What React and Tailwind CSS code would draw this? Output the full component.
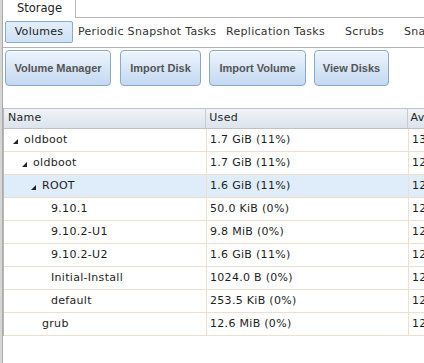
import React from "react";

const rows = [
  { name: "oldboot", level: 0, tri: true, used: "1.7 GiB (11%)", av: "13" },
  { name: "oldboot", level: 1, tri: true, used: "1.7 GiB (11%)", av: "12" },
  { name: "ROOT", level: 2, tri: true, used: "1.6 GiB (11%)", av: "12", sel: true },
  { name: "9.10.1", level: 3, used: "50.0 KiB (0%)", av: "12" },
  { name: "9.10.2-U1", level: 3, used: "9.8 MiB (0%)", av: "12" },
  { name: "9.10.2-U2", level: 3, used: "1.6 GiB (11%)", av: "12" },
  { name: "Initial-Install", level: 3, used: "1024.0 B (0%)", av: "12" },
  { name: "default", level: 3, used: "253.5 KiB (0%)", av: "12" },
  { name: "grub", level: 2, used: "12.6 MiB (0%)", av: "12" },
];

const indent = ["pl-[9px]", "pl-[18px]", "pl-[27px]", "pl-[36px]"];

function Tri() {
  return (
    <svg width="5" height="5" viewBox="0 0 5 5" className="block">
      <polygon points="5,0 5,5 0,5" fill="#222" />
    </svg>
  );
}

function BigButton({ w, children }) {
  return (
    <div
      className={`${w} h-[36px] flex items-center justify-center rounded-[4px] border border-[#8aa8c9] bg-gradient-to-b from-[#edf4fc] to-[#c3d9f1] text-[11px] font-bold text-[#555] tracking-normal shadow-[inset_0_1px_0_#fff]`}
      style={{ fontFamily: '"Liberation Sans", Arial, sans-serif' }}
    >
      {children}
    </div>
  );
}

export default function App() {
  return (
    <div
      className="w-[424px] h-[363px] overflow-hidden bg-white border-l-2 border-[#d6d6d6] text-[11px] tracking-[0.3px] text-[#1e1e1e]"
      style={{ fontFamily: '"DejaVu Sans", Verdana, sans-serif' }}
    >
      <div className="h-full border-l border-[#a9a9a9] flex flex-col">
        {/* Top tab bar */}
        <div className="flex h-[18px] shrink-0">
          <div className="w-[73px] h-[18px] border-r border-[#b8b8b8] pl-[14px] flex items-center text-[#222] text-[11.5px] tracking-normal">
            Storage
          </div>
          <div className="flex-1 border-b border-[#b8b8b8]" />
        </div>

        {/* Sub tabs */}
        <div className="h-[30px] shrink-0 border-b border-[#b4b4b4] flex items-start pt-[3px] pl-[2px] text-[#333] whitespace-nowrap overflow-hidden">
          <div className="w-[68px] shrink-0 h-[22px] rounded-[2px] border border-[#87acd2] bg-gradient-to-b from-[#e4eefa] to-[#cfe1f5] flex items-center justify-center text-[#222]">
            Volumes
          </div>
          <div className="w-[153px] shrink-0 h-[22px] pl-[5px] flex items-center">Periodic Snapshot Tasks</div>
          <div className="w-[119px] shrink-0 h-[22px] flex items-center">Replication Tasks</div>
          <div className="w-[59px] shrink-0 h-[22px] flex items-center">Scrubs</div>
          <div className="shrink-0 h-[22px] flex items-center">Snapshots</div>
        </div>

        {/* Buttons */}
        <div className="flex pt-[2px] pl-[2px] shrink-0">
          <BigButton w="w-[106px]">Volume Manager</BigButton>
          <div className="ml-[9px]">
            <BigButton w="w-[81px]">Import Disk</BigButton>
          </div>
          <div className="ml-[8px]">
            <BigButton w="w-[97px]">Import Volume</BigButton>
          </div>
          <div className="ml-[8px]">
            <BigButton w="w-[75px]">View Disks</BigButton>
          </div>
        </div>

        {/* Table */}
        <div className="mt-[22px] w-[460px] border-l border-[#b9b9b9]">
          <div className="flex h-[21px] border-t border-b border-[#c2c2c2] bg-gradient-to-b from-[#f0f4f8] to-[#dbe3ec] text-[#1e1e1e]">
            <div className="w-[203px] border-r border-[#c6ccd3] pl-[4px] flex items-center">Name</div>
            <div className="w-[202px] border-r border-[#c6ccd3] pl-[3px] flex items-center">Used</div>
            <div className="flex-1 pl-[3px] flex items-center">Available</div>
          </div>
          {rows.map((r, i) => (
            <div
              key={i}
              className={`flex h-[23px] border-b border-[#efdfcf] ${r.sel ? "bg-[#dfecfa]" : "bg-white"}`}
            >
              <div className={`w-[203px] border-r border-[#efdfcf] flex items-center ${indent[r.level]}`}>
                <div className="w-[5px] h-[5px] mt-[3px]">{r.tri ? <Tri /> : null}</div>
                <div className="ml-[6px]">{r.name}</div>
              </div>
              <div className="w-[202px] border-r border-[#efdfcf] pl-[3px] flex items-center">{r.used}</div>
              <div className="flex-1 pl-[3px] flex items-center">{r.av}.1 GiB</div>
            </div>
          ))}
        </div>
      </div>
    </div>
  );
}
